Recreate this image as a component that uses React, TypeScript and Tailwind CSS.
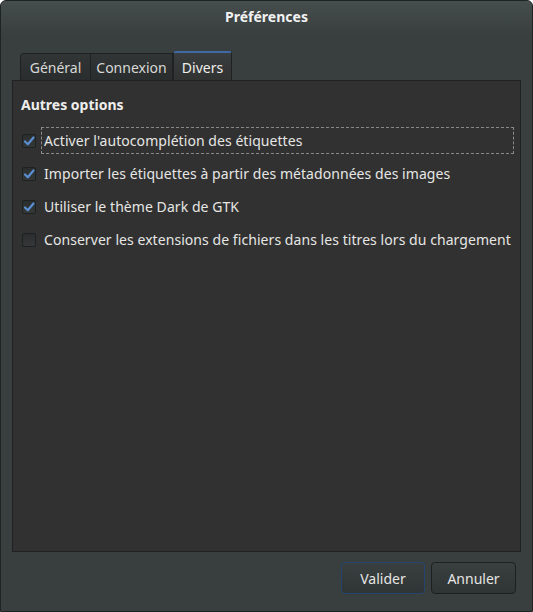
import React from "react";

const options = [
  { label: "Activer l'autocomplétion des étiquettes", checked: true, focused: true },
  { label: "Importer les étiquettes à partir des métadonnées des images", checked: true },
  { label: "Utiliser le thème Dark de GTK", checked: true },
  { label: "Conserver les extensions de fichiers dans les titres lors du chargement", checked: false },
];

function Check({ checked }: { checked: boolean }) {
  return (
    <div className="w-[14px] h-[14px] rounded-[2px] border border-[#1e2121] bg-gradient-to-b from-[#2b2e2e] to-[#343838] flex items-center justify-center shrink-0">
      {checked && (
        <svg width="12" height="12" viewBox="0 0 12 12">
          <path d="M2 6.5 L4.8 9.2 L10.5 2.5" fill="none" stroke="#5a8fd3" strokeWidth="2.2" strokeLinecap="round" strokeLinejoin="round" />
        </svg>
      )}
    </div>
  );
}

export default function App() {
  return (
    <div
      className="w-[533px] h-[612px] bg-[#393f3f] text-[#e6e6e4] text-[14px] flex flex-col rounded-t-[6px] border border-[#1f2323] overflow-hidden"
      style={{ fontFamily: '"Noto Sans", "Open Sans", sans-serif' }}
    >
      <div className="h-[34px] shrink-0 bg-gradient-to-b from-[#464d4d] to-[#393f3f] flex items-center justify-center">
        <span className="font-bold text-[#f2f2f2] text-[14px] -mt-[4px]">Préférences</span>
      </div>

      <div className="flex items-end h-[45px] shrink-0 pl-[19px]">
        <div className="w-[71px] h-[27px] flex items-center justify-center rounded-tl-[4px] border border-b-0 border-[#1f2222] bg-gradient-to-b from-[#313535] to-[#2a2d2d] text-[#d8d8d6]">
          Général
        </div>
        <div className="w-[82px] h-[27px] flex items-center justify-center border border-b-0 border-l-0 border-[#1f2222] bg-gradient-to-b from-[#313535] to-[#2a2d2d] text-[#d8d8d6]">
          Connexion
        </div>
        <div className="w-[59px] h-[29px] flex items-center justify-center rounded-t-[3px] border-x border-[#1f2222] border-t-2 border-t-[#3f6aa3] bg-gradient-to-b from-[#3a3e3e] to-[#313232] text-[#eeeeec] pt-[1px]">
          Divers
        </div>
      </div>

      <div className="mx-[11px] h-[472px] shrink-0 border border-[#1f2222] bg-[#313131] pl-[9px] pr-[6px] pt-[12px]">
        <div className="font-bold text-[#eeeeec] h-[22px] flex items-center -ml-[1px]">Autres options</div>
        <div className="flex flex-col pt-[9px] tracking-[0.06px]">
          {options.map((o) => (
            <div key={o.label} className="flex items-center h-[33px]">
              <Check checked={o.checked} />
              <div
                className={
                  "ml-[5px] flex-1 h-[27px] flex items-center px-[2px] " +
                  (o.focused ? "border border-dashed border-[#8a8a8a]" : "border border-transparent")
                }
              >
                {o.label}
              </div>
            </div>
          ))}
        </div>
      </div>

      <div className="flex justify-end gap-[6px] pr-[16px] pt-[10px]">
        <button className="w-[84px] h-[32px] rounded-[4px] border border-[#24466e] bg-gradient-to-b from-[#3a4040] to-[#2f3434] text-[#e6e6e4]">
          Valider
        </button>
        <button className="w-[85px] h-[32px] rounded-[4px] border border-[#1c2020] bg-gradient-to-b from-[#3a4040] to-[#2f3434] text-[#e6e6e4]">
          Annuler
        </button>
      </div>
    </div>
  );
}
